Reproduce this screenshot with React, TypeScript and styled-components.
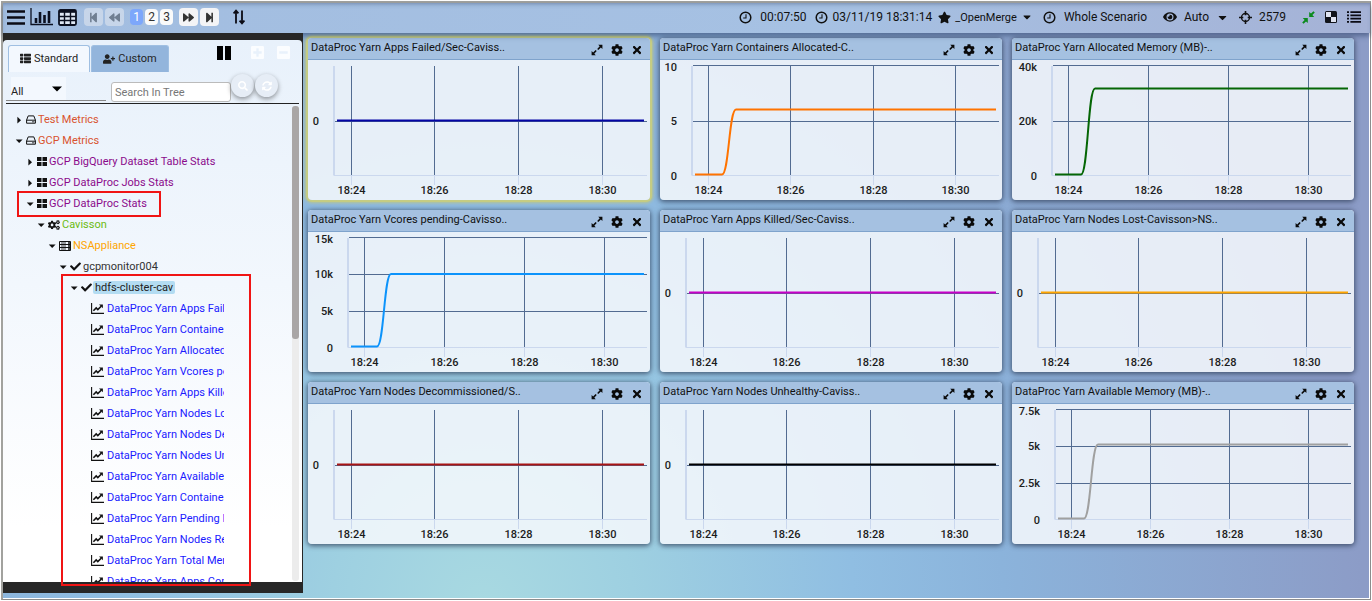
import React from "react";
import styled, { createGlobalStyle, css } from "styled-components";
import {
  FaCog, FaTimes, FaStar, FaEye, FaCogs, FaCheck, FaThList, FaUserPlus, FaPlusSquare, FaMinusSquare,
  FaSearch, FaSyncAlt, FaStepForward, FaBackward, FaForward, FaStepBackward, FaCaretDown,
} from "react-icons/fa";

const Global = createGlobalStyle`
  *, *::before, *::after { box-sizing: border-box; }
  body { margin: 0; background: #fff; font-family: Roboto, "Liberation Sans", sans-serif; color: #222; }
  button, input, select { font: inherit; color: inherit; }
  button { padding: 0; border: 0; background: none; display: flex; align-items: center; justify-content: center; cursor: pointer; }
  svg { display: block; flex: none; }
`;

const Window = styled.div`
  height: 100vh;
  padding: 1px;
`;

const Frame = styled.div`
  height: 100%;
  display: flex;
  flex-direction: column;
  border: 2px solid #a2a29e;
  border-right: 1px solid #8c8c8c;
  border-bottom: 1px solid #8c8c8c;
  box-shadow: inset -1px -1px #fff;
  background: radial-gradient(circle at 480px 600px, #a8d9e1 0, #9ed0e1 150px, #90bee2 370px, #8bb3db 520px, #8c9cc7 880px);
`;

const Toolbar = styled.header`
  position: relative;
  height: 30px;
  flex: none;
  display: flex;
  align-items: center;
  justify-content: space-between;
  padding: 0 9px 2px 4px;
  font-size: 12px;
  color: #111;
  background: linear-gradient(90deg, #a2bde0, #a6c1e3 60%, #a5b2d6);
  box-shadow: inset 0 3px 4px -2px rgba(60, 80, 120, 0.5), 0 3px 5px rgba(40, 60, 100, 0.55);
`;

const Group = styled.div<{ $gap?: number }>`
  display: flex;
  align-items: center;
  gap: ${(p) => p.$gap ?? 0}px;
`;

const Pager = styled.nav`
  display: flex;
  align-items: center;
  gap: 2px;
  margin: 0 14px 0 7px;
`;

const NavButton = styled.button<{ $faded?: boolean }>`
  width: 19px;
  height: 18px;
  border-radius: 4px;
  background: #f4f4f6;
  color: #333;
  opacity: ${(p) => (p.$faded ? 0.45 : 1)};
`;

const PageButton = styled.button<{ $on?: boolean }>`
  width: 13px;
  height: 16px;
  border-radius: 4px;
  background: ${(p) => (p.$on ? "#7da7fb" : "#fafafa")};
  color: ${(p) => (p.$on ? "#fff" : "#333")};
`;

const Pages = styled.div`
  display: flex;
  gap: 2px;
  margin: 0 4px;
`;

const Status = styled.span<{ $gap?: number; $small?: boolean; $after: number }>`
  display: flex;
  align-items: center;
  gap: ${(p) => p.$gap ?? 5}px;
  margin-right: ${(p) => p.$after}px;
  font-size: ${(p) => (p.$small ? 11 : 12)}px;
  white-space: nowrap;
`;

const Body = styled.div`
  flex: 1;
  min-height: 0;
  display: flex;
  padding-bottom: 6px;
`;

const Sidebar = styled.aside`
  position: relative;
  width: 300px;
  flex: none;
  display: flex;
  padding: 7px 1px 11px 0;
  background: #272727;
`;

const Panel = styled.div`
  flex: 1;
  min-width: 0;
  display: flex;
  flex-direction: column;
  padding: 5px 3px 0;
  border-radius: 4px 4px 0 0;
  background: linear-gradient(#e8f1fb, #f2f7fd 45%, #fff 90%);
`;

const TabRow = styled.div`
  display: flex;
  align-items: flex-start;
  height: 32px;
  padding: 0 8px 0 2px;
`;

const Tab = styled.button<{ $on?: boolean }>`
  width: ${(p) => (p.$on ? 82 : 78)}px;
  height: 27px;
  margin-right: 1px;
  padding-bottom: 1px;
  gap: 3px;
  font-size: 11px;
  border-radius: 3px 3px 0 0;
  border: 1px solid #9fbfe2;
  border-bottom: 0;
  background: ${(p) => (p.$on ? "#f3f8fe" : "#93b5dc")};
`;

const TabTools = styled.div`
  flex: 1;
  display: flex;
  justify-content: flex-end;
  align-items: center;
  color: #fbfdff;
`;

const Tool = styled.button<{ $dark?: boolean }>`
  margin-left: ${(p) => (p.$dark ? 0 : 11)}px;
  margin-right: ${(p) => (p.$dark ? 8 : 0)}px;
  color: ${(p) => (p.$dark ? "#000" : "inherit")};
`;

const FilterRow = styled.div`
  height: 27px;
  display: flex;
  align-items: flex-end;
  padding-bottom: 1px;
  border-bottom: 1px solid #222;
`;

const SelectWrap = styled.label`
  position: relative;
  width: 100px;
  height: 24px;
  margin: 0 5px 1px 0;
  padding-left: 5px;
  border-bottom: 1px solid #888;
  svg { position: absolute; left: 46px; top: 9px; pointer-events: none; }
`;

const Select = styled.select`
  appearance: none;
  width: 55px;
  height: 23px;
  padding: 5px 0 0;
  border: 0;
  background: #f3f8fe;
  font-size: 11px;
`;

const Search = styled.input`
  width: 120px;
  height: 20px;
  padding: 0 3px;
  border: 1px solid #bbb;
  border-radius: 3px;
  background: #fff;
  font-size: 11px;
  &::placeholder { color: #777; opacity: 1; }
`;

const Round = styled.button`
  width: 23px;
  height: 23px;
  margin: 0 1px 5px 0;
  border-radius: 50%;
  color: #fff;
  background: #e6edf6;
  box-shadow: 0 2px 5px rgba(0, 0, 0, 0.4);
`;

const TreeArea = styled.div`
  flex: 1;
  min-height: 0;
  display: flex;
`;

const Tree = styled.ul`
  flex: 1;
  min-width: 0;
  margin: 0;
  padding: 5px 0 0;
  list-style: none;
  overflow: hidden;
`;

const TreeItem = styled.li<{ $level: number; $color: string }>`
  position: relative;
  display: flex;
  align-items: center;
  gap: 2px;
  height: 21px;
  padding-left: ${(p) => 8 + p.$level * 11}px;
  font-size: 11px;
  white-space: nowrap;
  color: ${(p) => p.$color};
  svg { color: #111; }
`;

const Toggle = styled.button`
  width: 9px;
  margin-right: 1px;
`;

const Leaf = styled.a`
  display: block;
  width: 117px;
  margin-left: 1px;
  overflow: hidden;
  color: #1a1aff;
  text-decoration: none;
`;

const Label = styled.span<{ $on?: boolean }>`
  ${(p) => p.$on && css`
    padding: 0 2px;
    margin-left: -1px;
    border-radius: 2px;
    background: #b3dcf2;
  `}
`;

const Track = styled.div`
  width: 7px;
  margin: 2px 0 1px;
  border-radius: 3px;
  background: #ececec;
`;

const Thumb = styled.div`
  height: 49%;
  border-radius: 3px;
  background: #a9a6a6;
`;

const Mark = styled.div<{ $nested?: boolean }>`
  position: absolute;
  border: 2px solid #f01414;
  pointer-events: none;
  ${(p) => p.$nested
    ? css`left: 58px; right: 52px; top: 241px; bottom: 7px;`
    : css`left: 11px; width: 144px; top: -2px; height: 26px;`}
`;

const Grid = styled.main`
  flex: 1;
  min-width: 0;
  display: grid;
  grid-template-columns: repeat(3, minmax(0, 1fr));
  align-content: start;
  gap: 10px;
  padding: 5px 16px 0 5px;
`;

const Card = styled.section<{ $on?: boolean }>`
  border-radius: 4px;
  overflow: hidden;
  background: rgba(244, 247, 252, 0.88);
  box-shadow: ${(p) => (p.$on ? "0 0 0 2px #c5cc83, 0 0 3px 3px #b9c48c" : "0 1px 5px 1px rgba(45, 60, 85, 0.75)")};
`;

const CardHead = styled.header`
  display: flex;
  justify-content: space-between;
  height: 22px;
  padding: 0 7px 0 3px;
  border-bottom: 1px solid #7fa3cc;
  background: #a5c1e1;
`;

const Title = styled.h2`
  margin: 0;
  font-size: 11px;
  font-weight: 400;
  line-height: 19px;
  color: #111;
  white-space: nowrap;
`;

const Actions = styled.div`
  display: flex;
  align-items: center;
  gap: 8px;
  padding-top: 2px;
  color: #0a0a0a;
`;

const Plot = styled.svg`
  width: 100%;
  height: auto;
  text { font: 500 11px Roboto, "Liberation Sans", sans-serif; fill: #1c1c1c; }
`;

const ClockIcon = () => (
  <svg width="13" height="13" viewBox="0 0 13 13" fill="none" stroke="currentColor">
    <circle cx="6.5" cy="6.5" r="5.3" strokeWidth="1.5" />
    <path d="M7 3.2V7H4.2" strokeWidth="1.1" />
  </svg>
);

const ExpandIcon = () => (
  <svg width="12" height="12" viewBox="0 0 12 12" fill="currentColor">
    <path d="M7.2 .8H11.4V5L9.9 3.5 7.3 6 6.2 4.9 8.7 2.3ZM4.8 11.2H.6V7L2.1 8.5 4.6 6 5.7 7.1 3.3 9.7Z" />
  </svg>
);

const MenuIcon = () => (
  <svg width="18" height="15" viewBox="0 0 18 15"><path d="M0 1.5H18M0 7.5H18M0 13.5H18" stroke="#0b0b14" strokeWidth="2.4" /></svg>
);

const BarsIcon = () => (
  <svg width="23" height="18" viewBox="0 0 23 18" fill="none" stroke="#0b1020">
    <path d="M1 0V16.5H23" strokeWidth="1.3" />
    <path d="M6 15V10M10 15V4M14.5 15V7M19 15V3" strokeWidth="2.6" />
  </svg>
);

const TableIcon = () => (
  <svg width="19" height="17" viewBox="0 0 19 17" fill="none" stroke="#0b1020">
    <rect x="1" y="1" width="17" height="15" rx="1.5" fill="#dfe8f5" strokeWidth="1.8" />
    <path d="M1 2.5H18" strokeWidth="2.6" />
    <path d="M1 7.5H18M1 11.5H18M6.5 3V16M12.5 3V16" strokeWidth="1.4" />
  </svg>
);

const SortIcon = () => (
  <svg width="12" height="16" viewBox="0 0 12 16" fill="none" stroke="#0b0b14" strokeWidth="1.8">
    <path d="M3 14.5V2M.6 4.4 3 1.6 5.4 4.4M9 1.5V14M6.6 11.6 9 14.4 11.4 11.6" />
  </svg>
);

const PauseIcon = () => (
  <svg width="14" height="14" viewBox="0 0 14 14" fill="currentColor"><path d="M0 0H6V14H0ZM8 0H14V14H8Z" /></svg>
);

const DriveIcon = () => (
  <svg width="10" height="9" viewBox="0 0 10 9" fill="none" stroke="currentColor">
    <path d="M.6 5 2.2 .9H7.8L9.4 5V8.2H.6ZM.6 5.2H9.4" strokeWidth="1" />
    <path d="M6 6.8H8.4" strokeWidth=".8" />
  </svg>
);

const BlocksIcon = () => (
  <svg width="10" height="9" viewBox="0 0 10 9" fill="currentColor">
    <path d="M0 0H4.5V4H0ZM5.5 0H10V4H5.5ZM0 5H4.5V9H0ZM5.5 5H10V9H5.5Z" />
  </svg>
);

const ServerIcon = () => (
  <svg width="12" height="10" viewBox="0 0 12 10" fill="none" stroke="currentColor">
    <path d="M.5 .5H11.5V9.5H.5ZM.5 3.5H11.5M.5 6.5H11.5" />
    <path d="M2 2H7M2 5H7M2 8H7" strokeWidth=".8" />
    <path d="M9 2H11M9 5H11M9 8H11" strokeWidth="1.6" />
  </svg>
);

const TrendIcon = () => (
  <svg width="13" height="11" viewBox="0 0 13 11" fill="none" stroke="currentColor">
    <path d="M.6 0V10.4H13" strokeWidth="1.1" />
    <path d="M2.4 7.8 5.2 5 6.8 6.6 10.2 3.2" strokeWidth="1.6" />
    <path d="M8 1.4H11.9V5.3Z" fill="currentColor" stroke="none" />
  </svg>
);

const TwistIcon = ({ open }: { open?: boolean }) => (
  <svg width="8" height="8" viewBox="0 0 8 8" fill="currentColor">
    <path d={open ? "M.8 2.4H7.6L4.2 6Z" : "M2.4 .8V7.6L6 4.2Z"} />
  </svg>
);

const CrosshairIcon = () => (
  <svg width="13" height="13" viewBox="0 0 13 13" fill="none" stroke="currentColor">
    <circle cx="6.5" cy="6.5" r="4" strokeWidth="1.4" />
    <path d="M6.5 0V4.3M6.5 8.7V13M0 6.5H4.3M8.7 6.5H13" strokeWidth="1.6" />
  </svg>
);

const CompressIcon = () => (
  <svg width="13" height="13" viewBox="0 0 13 13" fill="#0b8a1d">
    <path d="M12.8 1.6 11.4.2 9 2.6 7.2.9V6H12.2L10.4 4ZM.2 11.4 1.6 12.8 4 10.4 5.8 12.1V7H.8L2.6 9Z" />
  </svg>
);

const QuadIcon = () => (
  <svg width="12" height="12" viewBox="0 0 12 12">
    <rect width="12" height="12" rx="1.5" fill="#11131a" />
    <path d="M1 1H6V6H1ZM6 6H11V11H6Z" fill="#dfe3f0" />
  </svg>
);

const ListIcon = () => (
  <svg width="14" height="12" viewBox="0 0 14 12" stroke="#0b0b14" strokeWidth="1.8">
    <path d="M0 1.2H2M3.4 1.2H14M0 4.4H2M3.4 4.4H14M0 7.6H2M3.4 7.6H14M0 10.8H2M3.4 10.8H14" />
  </svg>
);

type Chart = {
  title: string;
  color: string;
  axis: number;
  ticks: number[];
  labels: [string, number][];
  level: number;
  rise?: number;
  selected?: boolean;
};

const TIMES = ["18:24", "18:26", "18:28", "18:30"];
const flat = { axis: 26, ticks: [43.5, 126.5, 210.5, 294.5], labels: [["0", 61.5]] as [string, number][], level: 60.5 };

const CHARTS: Chart[] = [
  { ...flat, title: "DataProc Yarn Apps Failed/Sec-Caviss..", color: "#0505a5", selected: true },
  { title: "DataProc Yarn Containers Allocated-C..", color: "#ff7300", axis: 32, ticks: [48.5, 130.5, 213.5, 295.5], labels: [["10", 5.5], ["5", 61.5], ["0", 115.5]], level: 49.5, rise: 63 },
  { title: "DataProc Yarn Allocated Memory (MB)-..", color: "#056605", axis: 40, ticks: [56.5, 136.5, 216.5, 296.5], labels: [["40k", 5.5], ["20k", 61.5], ["0", 115.5]], level: 28.5, rise: 70 },
  { title: "DataProc Yarn Vcores pending-Cavisso..", color: "#0c93fb", axis: 40, ticks: [56.5, 136.5, 216.5, 296.5], labels: [["15k", 5.5], ["10k", 42.5], ["5k", 79.5], ["0", 115.5]], level: 42, rise: 70 },
  { ...flat, title: "DataProc Yarn Apps Killed/Sec-Caviss..", color: "#c800c8" },
  { ...flat, title: "DataProc Yarn Nodes Lost-Cavisson>NS..", color: "#ffa500" },
  { ...flat, title: "DataProc Yarn Nodes Decommissioned/S..", color: "#a81414" },
  { ...flat, title: "DataProc Yarn Nodes Unhealthy-Caviss..", color: "#000" },
  { title: "DataProc Yarn Available Memory (MB)-..", color: "#a0a0a0", axis: 43, ticks: [59.5, 138.5, 217.5, 296.5], labels: [["7.5k", 5.5], ["5k", 42.5], ["2.5k", 79.5], ["0", 115.5]], level: 40.5, rise: 73 },
];

const BASE = 115.5;

function ChartCard({ chart }: { chart: Chart }) {
  const { axis, ticks, labels, level, rise, color } = chart;
  const start = axis + 3;
  const line = rise
    ? `M${start} 114.5H${rise - 1}C${rise + 6} 114.5 ${rise + 6} ${level} ${rise + 13} ${level}H336`
    : `M${start} ${level}H336`;
  const single = labels.length === 1;
  return (
    <Card $on={chart.selected}>
      <CardHead>
        <Title>{chart.title}</Title>
        <Actions>
          <button aria-label="Expand"><ExpandIcon /></button>
          <button aria-label="Settings"><FaCog size={12} /></button>
          <button aria-label="Close"><FaTimes size={12} /></button>
        </Actions>
      </CardHead>
      <Plot viewBox="0 0 342 140" role="img" aria-label={chart.title}>
        <path d={`M${axis} 6V${BASE}`} stroke="#cbd8ee" strokeWidth="2" />
        <path d={`M${axis} ${BASE}H339`} stroke="#cbd8ee" />
        {labels.map(([text, y]) => (
          <g key={text}>
            {y !== BASE && <path d={`M${axis + 1} ${y}H339`} stroke="#526b91" />}
            <text x={single ? 11 : axis - 15} y={Math.floor(y) + (y < 10 ? 6 : y === BASE ? 5 : 4)} textAnchor="end">{text}</text>
          </g>
        ))}
        {ticks.map((x, i) => (
          <g key={x}>
            <path d={`M${x} 6V115`} stroke="#526b91" />
            <path d={`M${x} 116V125`} stroke="#cbd8ee" />
            <text x={x} y="134" textAnchor="middle">{TIMES[i]}</text>
          </g>
        ))}
        <path d={line} fill="none" stroke={color} strokeWidth="2" />
      </Plot>
    </Card>
  );
}

type Node = { label: string; level: number; color: string; icon: React.ReactNode; open?: boolean; marked?: boolean; current?: boolean };

const NODES: Node[] = [
  { label: "Test Metrics", level: 0, color: "#d9532f", icon: <DriveIcon /> },
  { label: "GCP Metrics", level: 0, color: "#d9532f", icon: <DriveIcon />, open: true },
  { label: "GCP BigQuery Dataset Table Stats", level: 1, color: "#8b0a8b", icon: <BlocksIcon /> },
  { label: "GCP DataProc Jobs Stats", level: 1, color: "#8b0a8b", icon: <BlocksIcon /> },
  { label: "GCP DataProc Stats", level: 1, color: "#8b0a8b", icon: <BlocksIcon />, open: true, marked: true },
  { label: "Cavisson", level: 2, color: "#6dbb12", icon: <FaCogs size={12} />, open: true },
  { label: "NSAppliance", level: 3, color: "#ffa500", icon: <ServerIcon />, open: true },
  { label: "gcpmonitor004", level: 4, color: "#333", icon: <FaCheck size={11} />, open: true },
  { label: "hdfs-cluster-cav", level: 5, color: "#222", icon: <FaCheck size={11} />, open: true, current: true },
];

const LEAVES = [
  "Apps Failed/Sec", "Containers Allocated", "Allocated Memory (MB)", "Vcores pending", "Apps Killed/Sec",
  "Nodes Lost", "Nodes Decommissioned/Sec", "Nodes Unhealthy", "Available Memory (MB)", "Containers Pending",
  "Pending Memory (MB)", "Nodes Rebooted", "Total Memory (MB)", "Apps Completed/Sec",
];

export default function App() {
  return (
    <Window>
      <Global />
      <Frame>
        <Toolbar>
          <Group>
            <Group $gap={5}>
              <button aria-label="Menu"><MenuIcon /></button>
              <button aria-label="Charts"><BarsIcon /></button>
              <button aria-label="Table"><TableIcon /></button>
            </Group>
            <Pager aria-label="Pages">
              <NavButton $faded aria-label="First page"><FaStepBackward size={11} /></NavButton>
              <NavButton $faded aria-label="Previous page"><FaBackward size={11} /></NavButton>
              <Pages>
                <PageButton $on>1</PageButton>
                <PageButton>2</PageButton>
                <PageButton>3</PageButton>
              </Pages>
              <NavButton aria-label="Next page"><FaForward size={11} /></NavButton>
              <NavButton aria-label="Last page"><FaStepForward size={11} /></NavButton>
            </Pager>
            <button aria-label="Sort"><SortIcon /></button>
          </Group>
          <Group>
            <Status $gap={8} $after={8}><ClockIcon />00:07:50</Status>
            <Status $after={6}><ClockIcon />03/11/19 18:31:14</Status>
            <Status $small $gap={4} $after={10}><FaStar size={13} />_OpenMerge <FaCaretDown size={12} /></Status>
            <Status $gap={8} $after={16}><ClockIcon />Whole Scenario</Status>
            <Status $gap={7} $after={10}><FaEye size={14} />Auto <FaCaretDown size={13} /></Status>
            <Status $gap={7} $after={16}><CrosshairIcon />2579</Status>
            <Group $gap={10}>
              <button aria-label="Collapse"><CompressIcon /></button>
              <button aria-label="Layout"><QuadIcon /></button>
              <button aria-label="List"><ListIcon /></button>
            </Group>
          </Group>
        </Toolbar>
        <Body>
          <Sidebar>
            <Panel>
              <TabRow>
                <Tab $on><FaThList size={11} />Standard</Tab>
                <Tab><FaUserPlus size={12} />Custom</Tab>
                <TabTools>
                  <Tool $dark aria-label="Pause"><PauseIcon /></Tool>
                  <Tool aria-label="Add"><FaPlusSquare size={15} /></Tool>
                  <Tool aria-label="Remove"><FaMinusSquare size={15} /></Tool>
                </TabTools>
              </TabRow>
              <FilterRow>
                <SelectWrap>
                  <Select aria-label="Filter"><option>All</option></Select>
                  <svg width="10" height="6" viewBox="0 0 10 6"><path d="M0 .5H10L5 5.5Z" /></svg>
                </SelectWrap>
                <Search placeholder="Search In Tree" aria-label="Search In Tree" />
                <Round aria-label="Search"><FaSearch size={10} /></Round>
                <Round aria-label="Refresh"><FaSyncAlt size={10} /></Round>
              </FilterRow>
              <TreeArea>
                <Tree>
                  {NODES.map((n) => (
                    <TreeItem key={n.label} $level={n.level} $color={n.color}>
                      <Toggle aria-label={n.label}><TwistIcon open={n.open} /></Toggle>
                      {n.icon}
                      <Label $on={n.current}>{n.label}</Label>
                      {n.marked && <Mark />}
                    </TreeItem>
                  ))}
                  {LEAVES.map((l) => (
                    <TreeItem key={l} $level={7} $color="#1a1aff">
                      <TrendIcon />
                      <Leaf href="#">DataProc Yarn {l}</Leaf>
                    </TreeItem>
                  ))}
                </Tree>
                <Track><Thumb /></Track>
              </TreeArea>
            </Panel>
            <Mark $nested />
          </Sidebar>
          <Grid>
            {CHARTS.map((c) => <ChartCard key={c.title} chart={c} />)}
          </Grid>
        </Body>
      </Frame>
    </Window>
  );
}
